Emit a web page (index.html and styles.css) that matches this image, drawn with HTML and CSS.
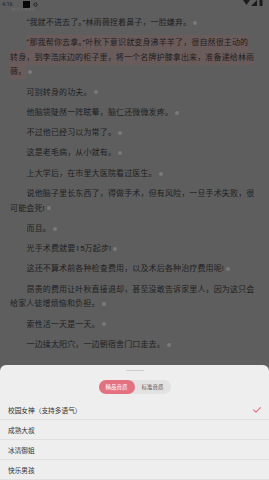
FILE: index.html
```html
<!DOCTYPE html>
<html lang="zh-CN">
<head>
<meta charset="utf-8">
<meta name="viewport" content="width=device-width, initial-scale=1">
<link rel="stylesheet" href="styles.css">
</head>
<body>
<div class="screen">
  <div class="status">
    <div class="status-left">
      <span class="time">4:16</span>
      <span class="sq"></span>
      <svg class="gear" width="5" height="5" viewBox="0 0 10 10"><circle cx="5" cy="5" r="3.2" fill="none" stroke="#222" stroke-width="2"/></svg>
    </div>
    <div class="status-right">
      <svg width="22" height="7" viewBox="0 0 22 7">
        <path d="M0 0 L7 0 L3.5 5 Z" fill="#1c1c1c"/>
        <path d="M8 6 L14 0 L14 6 Z" fill="#1c1c1c"/>
        <rect x="16.5" y="0" width="3" height="6" fill="#1c1c1c"/>
      </svg>
    </div>
  </div>
  <div class="chapter">第6章 头痛欲裂</div>
  <div class="content">
    <p>“我就不进去了。”林雨薇捏着鼻子，一脸嫌弃。<i class="dot"></i></p>
    <p><span class="hl">“那我帮你去拿。”叶秋下意识就变身沸羊羊了，很自然很主动的转身，到李浩床边的柜子里，将一个名牌护膝拿出来，准备递给林雨薇。</span><i class="dot"></i></p>
    <p>可别转身的功夫。<i class="dot"></i></p>
    <p>他脑袋陡然一阵眩晕，脑仁还微微发疼。<i class="dot"></i></p>
    <p>不过他已经习以为常了。<i class="dot"></i></p>
    <p>这是老毛病，从小就有。<i class="dot"></i></p>
    <p>上大学后，在市里大医院看过医生。<i class="dot"></i></p>
    <p>说他脑子里长东西了，得做手术，但有风险，一旦手术失败，很可能会死!<i class="dot"></i></p>
    <p>而且。<i class="dot"></i></p>
    <p>光手术费就要15万起步!<i class="dot"></i></p>
    <p>这还不算术前各种检查费用，以及术后各种治疗费用呢!<i class="dot"></i></p>
    <p>昂贵的费用让叶秋直接退却，甚至没敢告诉家里人，因为这只会给家人徒增烦恼和负担。<i class="dot"></i></p>
    <p>索性活一天是一天。<i class="dot"></i></p>
    <p>一边揉太阳穴，一边朝宿舍门口走去。<i class="dot"></i></p>
  </div>

  <div class="sheet">
    <div class="handle"></div>
    <div class="tabs">
      <span class="tab active">精品音质</span>
      <span class="tab">标准音质</span>
    </div>
    <ul class="voices">
      <li class="voice"><span>校园女神（支持多语气）</span>
        <svg class="check" width="8" height="6" viewBox="0 0 8 6"><path d="M0.6 3 L3 5.2 L7.4 0.6" fill="none" stroke="#e4717f" stroke-width="1.1" stroke-linecap="round" stroke-linejoin="round"/></svg>
      </li>
      <li class="voice"><span>成熟大叔</span></li>
      <li class="voice"><span>冰清御姐</span></li>
      <li class="voice"><span>快乐男孩</span></li>
    </ul>
  </div>
</div>
</body>
</html>
```
FILE: styles.css
```css
* { box-sizing: border-box; }
html {
  -webkit-text-size-adjust: 100%;
  text-size-adjust: 100%;
}
html, body { margin: 0; padding: 0; }
body {
  width: 269px;
  height: 480px;
  overflow: hidden;
  background: #5e5e5e;
  font-family: Roboto, "Noto Sans CJK SC", sans-serif;
}
.screen {
  position: relative;
  width: 269px;
  height: 480px;
  overflow: hidden;
}
.status {
  height: 8px;
  display: flex;
  justify-content: space-between;
  align-items: flex-start;
  padding: 0 4px 0 2px;
}
.status-left {
  display: flex;
  align-items: center;
  gap: 3px;
  height: 8px;
}
.time {
  font-size: 5.5px;
  color: #222;
  line-height: 8px;
  width: 18px;
}
.sq {
  width: 7px;
  height: 7px;
  background: #080808;
}
.status-right { display: flex; }
.chapter {
  font-size: 3.5px;
  line-height: 5px;
  color: #6e6e6e;
  padding-left: 11px;
  height: 5px;
}
.content {
  padding: 3px 13px 0 10px;
}
.content p {
  margin: 0 0 5.8px 0;
  font-size: 8px;
  letter-spacing: 0.14px;
  line-height: 14.5px;
  color: #1e1e1e;
  text-indent: 16.5px;
}
.hl {
  background: #6b5c5c;
  padding: 3px 0;
}
.dot {
  display: inline-block;
  width: 4px;
  height: 4px;
  border-radius: 50%;
  background: #7a7a7a;
  margin-left: 2px;
  vertical-align: middle;
  text-indent: 0;
}
.sheet {
  position: absolute;
  left: 0;
  right: 0;
  top: 365px;
  bottom: 0;
  background: #eeeeee;
  border-radius: 6px 6px 0 0;
  display: flex;
  flex-direction: column;
  align-items: center;
}
.handle {
  width: 18px;
  height: 2px;
  border-radius: 1px;
  background: #cdcdcd;
  margin-top: 5px;
}
.tabs {
  margin-top: 9px;
  display: flex;
  background: #e2e2e2;
  border-radius: 7px;
  height: 14px;
}
.tab {
  width: 36px;
  height: 14px;
  border-radius: 7px;
  font-size: 5.5px;
  line-height: 14px;
  text-align: center;
  color: #555;
}
.tab.active {
  background: #e4717f;
  color: #fff;
}
.voices {
  list-style: none;
  margin: 6px 0 0 0;
  padding: 0;
  align-self: stretch;
}
.voice {
  height: 20px;
  display: flex;
  align-items: center;
  justify-content: space-between;
  padding: 0 8px 0 8px;
  font-size: 6.7px;
  color: #333;
  border-bottom: 1px solid #e0e0e0;
}
```
